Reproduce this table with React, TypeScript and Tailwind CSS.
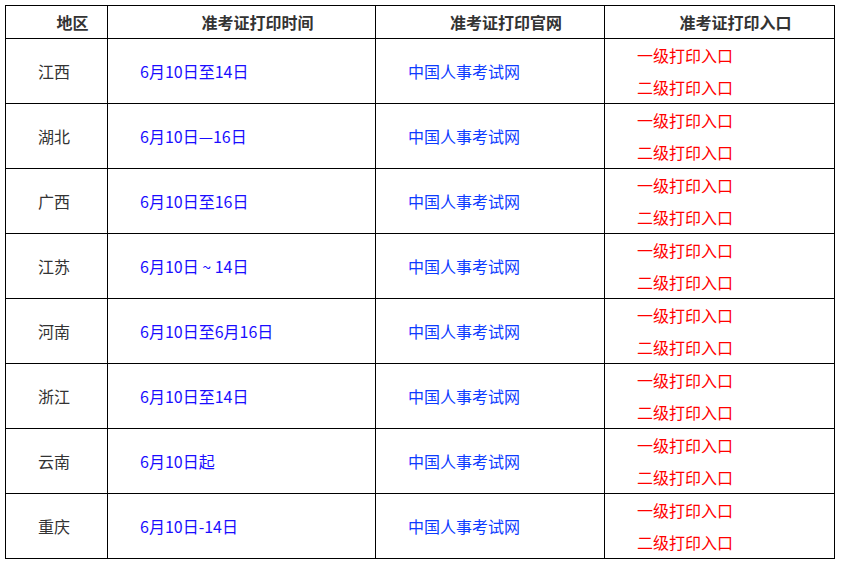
const rows: [string, string][] = [
  ["江西", "6月10日至14日"],
  ["湖北", "6月10日—16日"],
  ["广西", "6月10日至16日"],
  ["江苏", "6月10日 ~ 14日"],
  ["河南", "6月10日至6月16日"],
  ["浙江", "6月10日至14日"],
  ["云南", "6月10日起"],
  ["重庆", "6月10日-14日"],
];

const head = "border border-black text-center font-bold text-[#333] indent-8 p-0";
const cell = "border border-black p-0 indent-8 text-left align-middle";

export default function App() {
  return (
    <div className="bg-white w-[842px] h-[561px] pt-[5px] pl-[5px] font-['Noto_Sans_CJK_SC','Microsoft_YaHei',sans-serif] text-[16px]">
      <table className="border-collapse table-fixed w-[829px]">
        <colgroup>
          <col className="w-[102px]" />
          <col className="w-[268px]" />
          <col className="w-[229px]" />
          <col className="w-[230px]" />
        </colgroup>
        <thead>
          <tr className="h-[33px] leading-none">
            <th className={head}>地区</th>
            <th className={head}>准考证打印时间</th>
            <th className={head}>准考证打印官网</th>
            <th className={head}>准考证打印入口</th>
          </tr>
        </thead>
        <tbody>
          {rows.map(([area, date]) => (
            <tr key={area} className="h-[65px]">
              <td className={`${cell} text-[#333]`}>{area}</td>
              <td className={`${cell} text-[#1a0dff]`}>{date}</td>
              <td className={`${cell} text-[#0d3bff]`}>中国人事考试网</td>
              <td className={`${cell} text-[#ff0000]`}>
                <div className="leading-[32px]">一级打印入口</div>
                <div className="leading-[32px]">二级打印入口</div>
              </td>
            </tr>
          ))}
        </tbody>
      </table>
    </div>
  );
}
